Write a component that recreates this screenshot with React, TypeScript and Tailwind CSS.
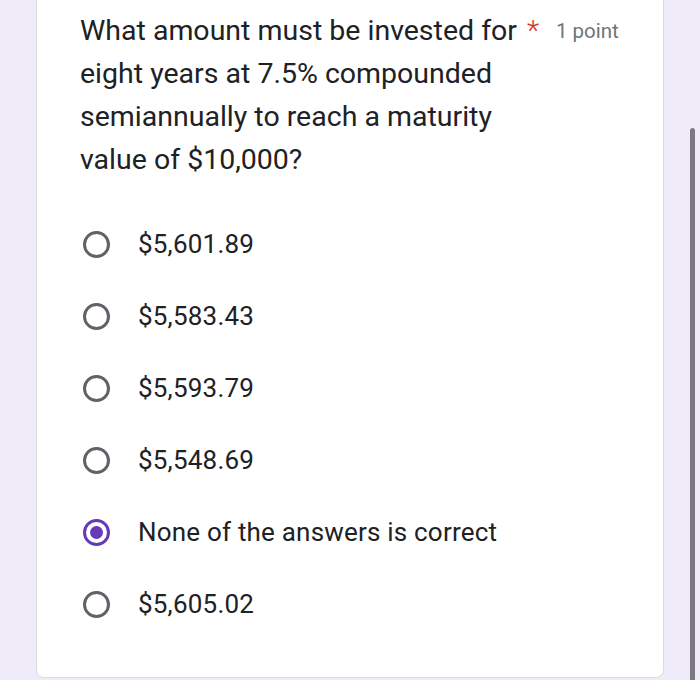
const options = ["$5,601.89", "$5,583.43", "$5,593.79", "$5,548.69", "None of the answers is correct", "$5,605.02"];
const selected = 4;

const Radio = ({ checked }: { checked: boolean }) =>
  checked ? (
    <span className="flex h-[27px] w-[27px] shrink-0 items-center justify-center rounded-full border-[3px] border-[#673ab7]">
      <span className="h-[13px] w-[13px] rounded-full bg-[#673ab7]" />
    </span>
  ) : (
    <span className="h-[27px] w-[27px] shrink-0 rounded-full border-[3px] border-[#5f6368]" />
  );

export default function App() {
  return (
    <div className="flex h-[680px] w-[700px] overflow-hidden bg-[#efebf8] font-['Roboto',sans-serif]">
      <div className="ml-[36px] mt-[-20px] h-[698px] w-[628px] rounded-b-lg border border-[#dadce0] bg-white pl-[43px] pr-[10px] pt-[28px]">
        <div className="flex items-start">
          <p className="w-[468px] text-[28.5px] leading-[43px] text-[#202124]">
            What amount must be invested for <span className="ml-[3px] font-light text-[#d93025]">*</span> eight years at 7.5% compounded semiannually to reach a maturity value of $10,000?
          </p>
          <span className="ml-[8px] mt-[8px] shrink-0 text-[20.5px] leading-[28px] text-[#70757a]">1 point</span>
        </div>
        <div className="mt-[27px] flex flex-col">
          {options.map((o, i) => (
            <div key={i} className="flex h-[72px] items-center gap-[28px] pl-[3px]">
              <Radio checked={i === selected} />
              <span className="text-[26px] tracking-[0.2px] text-[#202124]">{o}</span>
            </div>
          ))}
        </div>
      </div>
      <div className="ml-[26px] mt-[128px] h-[560px] w-[5px] rounded-full bg-[#7b7882]" />
    </div>
  );
}
